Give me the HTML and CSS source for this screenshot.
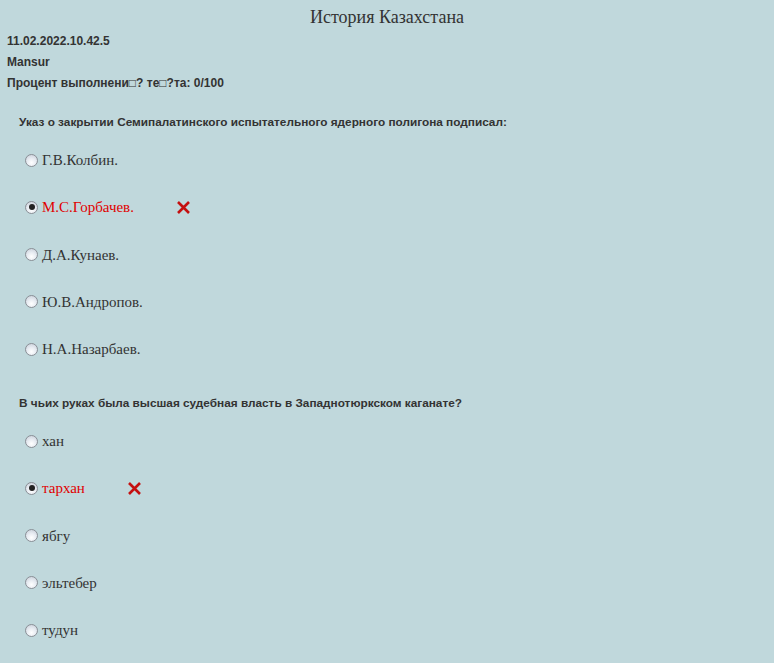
FILE: index.html
```html
<!DOCTYPE html>
<html lang="ru">
<head>
<meta charset="utf-8">
<title>История Казахстана</title>
<link rel="stylesheet" href="styles.css">
</head>
<body>
<h1 class="title">История Казахстана</h1>
<div class="info">
  <div>11.02.2022.10.42.5</div>
  <div>Mansur</div>
  <div>Процент выполнени&#9633;? те&#9633;?та: 0/100</div>
</div>

<div class="questions">
<div class="question">
  <div class="q-text">Указ о закрытии Семипалатинского испытательного ядерного полигона подписал:</div>
  <div class="options">
    <div class="option"><span class="radio"></span><span class="label">Г.В.Колбин.</span></div>
    <div class="option wrong"><span class="radio checked"></span><span class="label">М.С.Горбачев.</span>
      <svg class="cross" width="15" height="15" viewBox="0 0 15 15"><path d="M2 2 L13 13 M13 2 L2 13" stroke="#c41010" stroke-width="2.6" stroke-linecap="butt"/></svg></div>
    <div class="option"><span class="radio"></span><span class="label">Д.А.Кунаев.</span></div>
    <div class="option"><span class="radio"></span><span class="label">Ю.В.Андропов.</span></div>
    <div class="option"><span class="radio"></span><span class="label">Н.А.Назарбаев.</span></div>
  </div>
</div>

<div class="question">
  <div class="q-text">В чьих руках была высшая судебная власть в Западнотюркском каганате?</div>
  <div class="options">
    <div class="option"><span class="radio"></span><span class="label">хан</span></div>
    <div class="option wrong"><span class="radio checked"></span><span class="label">тархан</span>
      <svg class="cross" width="15" height="15" viewBox="0 0 15 15"><path d="M2 2 L13 13 M13 2 L2 13" stroke="#c41010" stroke-width="2.6" stroke-linecap="butt"/></svg></div>
    <div class="option"><span class="radio"></span><span class="label">ябгу</span></div>
    <div class="option"><span class="radio"></span><span class="label">эльтебер</span></div>
    <div class="option"><span class="radio"></span><span class="label">тудун</span></div>
  </div>
</div>
</div>
</body>
</html>
```
FILE: styles.css
```css
html, body {
  margin: 0;
  padding: 0;
  background: #c0d8dc;
  color: #333;
}
body {
  padding-top: 6px;
}
.title {
  margin: 0;
  font: normal 18px/22px "Liberation Serif", serif;
  text-align: center;
  color: #333;
}
.info {
  margin: 3px 0 0 7px;
  font: bold 12px/21px "Liberation Sans", Arial, sans-serif;
  color: #333;
}
.questions {
  display: flex;
  flex-direction: column;
  gap: 34px;
  margin: 18px 0 0 19px;
}
.q-text {
  font: bold 11.8px/20px "Liberation Sans", Arial, sans-serif;
  color: #333;
}
.options {
  display: flex;
  flex-direction: column;
  gap: 27.25px;
  margin-top: 18px;
  margin-left: 6px;
}
.option {
  display: flex;
  align-items: center;
  height: 20px;
  font: 15px/20px "Liberation Serif", serif;
  color: #333;
}
.option.wrong .label { color: #e00000; }
.radio {
  box-sizing: border-box;
  width: 13px;
  height: 13px;
  border-radius: 50%;
  border: 1px solid #8a8f96;
  background: radial-gradient(circle at 50% 70%, #ffffff 0%, #e8ecf2 45%, #c4cbd6 100%);
  margin-right: 4px;
  position: relative;
  flex: none;
}
.radio.checked::after {
  content: "";
  position: absolute;
  left: 2.5px;
  top: 2.5px;
  width: 6px;
  height: 6px;
  border-radius: 50%;
  background: #222;
}
.cross {
  margin-left: 42px;
  flex: none;
}
```
